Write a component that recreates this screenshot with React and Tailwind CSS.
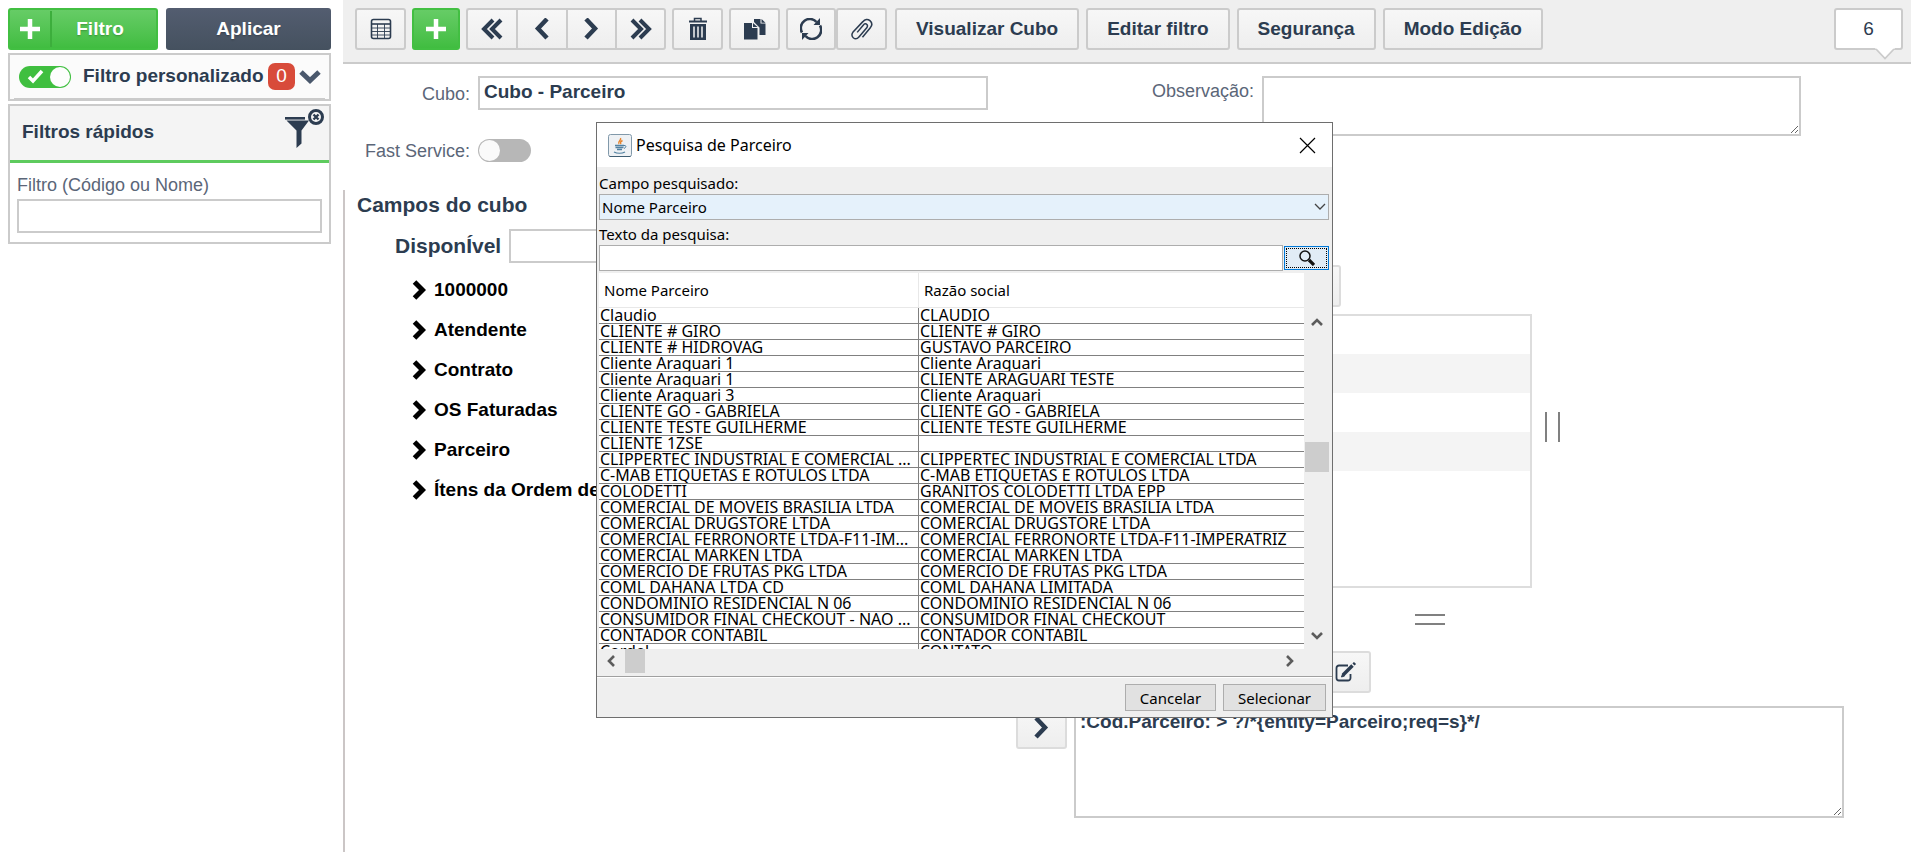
import { useState } from "react";

const partners = [
  ["Claudio", "CLAUDIO"],
  ["CLIENTE # GIRO", "CLIENTE # GIRO"],
  ["CLIENTE # HIDROVAG", "GUSTAVO PARCEIRO"],
  ["Cliente Araguari 1", "Cliente Araguari"],
  ["Cliente Araguari 1", "CLIENTE ARAGUARI TESTE"],
  ["Cliente Araguari 3", "Cliente Araguari"],
  ["CLIENTE GO - GABRIELA", "CLIENTE GO - GABRIELA"],
  ["CLIENTE TESTE GUILHERME", "CLIENTE TESTE GUILHERME"],
  ["CLIENTE 1ZSE", ""],
  ["CLIPPERTEC INDUSTRIAL E COMERCIAL ...", "CLIPPERTEC INDUSTRIAL E COMERCIAL LTDA"],
  ["C-MAB ETIQUETAS E ROTULOS LTDA", "C-MAB ETIQUETAS E ROTULOS LTDA"],
  ["COLODETTI", "GRANITOS COLODETTI LTDA EPP"],
  ["COMERCIAL DE MOVEIS BRASILIA LTDA", "COMERCIAL DE MOVEIS BRASILIA LTDA"],
  ["COMERCIAL DRUGSTORE LTDA", "COMERCIAL DRUGSTORE LTDA"],
  ["COMERCIAL FERRONORTE LTDA-F11-IM...", "COMERCIAL FERRONORTE LTDA-F11-IMPERATRIZ"],
  ["COMERCIAL MARKEN LTDA", "COMERCIAL MARKEN LTDA"],
  ["COMERCIO DE FRUTAS PKG LTDA", "COMERCIO DE FRUTAS PKG LTDA"],
  ["COML DAHANA LTDA CD", "COML DAHANA LIMITADA"],
  ["CONDOMINIO RESIDENCIAL N 06", "CONDOMINIO RESIDENCIAL N 06"],
  ["CONSUMIDOR FINAL CHECKOUT - NAO ...", "CONSUMIDOR FINAL CHECKOUT"],
  ["CONTADOR CONTABIL", "CONTADOR CONTABIL"],
  ["Cordel", "CONTATO"],
];

const cubeFields = ["1000000", "Atendente", "Contrato", "OS Faturadas", "Parceiro", "Ítens da Ordem de Serviço"];

const grayButton =
  "flex items-center justify-center h-[42px] shrink-0 border-2 border-[#cbcbcb] rounded-[3px] bg-linear-to-b from-[#f7f7f7] to-[#eeeeee] text-[#2c3c50]";

function Chevron({ dir = "right", double = false }) {
  const right = double ? "M2 2l9 9-9 9M10 2l9 9-9 9" : "M5 1l9 9.500-9 9.500";
  const left = double ? "M20 2l-9 9 9 9M12 2l-9 9 9 9" : "M16 1L7 10.500 16 20";
  return (
    <svg width="22" height="22" viewBox="0 0 22 22" fill="none" stroke="currentColor" strokeWidth={double ? 4 : 4.5}>
      <path d={dir === "right" ? right : left} />
    </svg>
  );
}

function ScrollArrow({ d }) {
  return (
    <svg width="12" height="12" viewBox="0 0 12 12" fill="none" stroke="#5c5c5c" strokeWidth="2.6">
      <path d={d} />
    </svg>
  );
}

function PlusIcon() {
  return (
    <svg width="22" height="22" viewBox="0 0 22 22" fill="none" stroke="currentColor" strokeWidth="4.5">
      <path d="M11 1v20M1 11h20" />
    </svg>
  );
}

function TableIcon() {
  return (
    <svg width="22" height="22" viewBox="0 0 22 22" fill="none" stroke="currentColor">
      <rect x="1.5" y="1.5" width="19" height="19" rx="2" strokeWidth="1.6" />
      <path d="M1.5 6h19" strokeWidth="1.6" />
      <path d="M1.5 10h19M1.5 13.5h19M1.5 17h19M7.5 6v14M14.5 6v14" strokeWidth="0.9" />
    </svg>
  );
}

function TrashIcon() {
  return (
    <svg width="20" height="24" viewBox="0 0 20 24" fill="none" stroke="currentColor">
      <path d="M1 4.500h18" strokeWidth="2" />
      <path d="M6.500 4V1.500h6.500V4" strokeWidth="1.5" />
      <path d="M2 7h16v16H2z" fill="currentColor" stroke="none" />
      <path d="M6 9.500v11M10 9.500v11M14 9.500v11" stroke="#f3f3f3" strokeWidth="1.5" />
    </svg>
  );
}

function CopyIcon() {
  return (
    <svg width="22" height="22" viewBox="0 0 22 22" fill="currentColor">
      <path d="M10 1h6.500v4.500h5V17h-6V9.500L10 4z" />
      <path d="M17.500 1l4 3.700h-4z" />
      <path d="M0 5h8v5h5.500v11.500H0z" />
      <path d="M9 5l4.500 4H9z" />
    </svg>
  );
}

function RefreshIcon() {
  return (
    <svg width="22" height="22" viewBox="0 0 22 22" fill="none" stroke="currentColor" strokeWidth="2.600">
      <path d="M2 14.500A9 9 0 0 1 16.500 4" />
      <path d="M20 7.500A9 9 0 0 1 5.500 18" />
      <path d="M20 0v7h-6.500zM2 22v-7h6.500z" fill="currentColor" stroke="none" />
    </svg>
  );
}

function ClipIcon() {
  return (
    <svg width="23" height="23" viewBox="0 0 24 24" fill="none" stroke="currentColor" strokeWidth="1.6">
      <path d="M13 20l8-9.500c2.500-3 1.800-6-.2-7.700-2.200-1.800-5.300-1.500-7.400 1L3.200 14.500c-1.700 2-1.500 4.700.2 6.100 1.800 1.500 4.300 1.100 5.900-.8l8.200-9.700c1-1.200 1-2.700 0-3.500-1-.9-2.500-.6-3.500.6L7.500 15" />
    </svg>
  );
}

function FunnelIcon() {
  return (
    <svg width="40" height="42" viewBox="0 0 40 42" fill="#2c3c50">
      <path d="M0 9h20v2.600H0z" />
      <path d="M1.500 12.600h22.500L16.500 22.500v13l-5 4.500V22.500z" />
      <circle cx="31" cy="9" r="6.500" fill="#f4f4f4" stroke="#2c3c50" strokeWidth="3" />
      <path d="M28.500 6.500l5 5M33.500 6.500l-5 5" stroke="#2c3c50" strokeWidth="2.400" />
    </svg>
  );
}

function EditIcon() {
  return (
    <svg width="22" height="20" viewBox="0 0 22 20" fill="none" stroke="currentColor">
      <path d="M13 3.500H4a2.500 2.500 0 0 0-2.500 2.500v10A2.500 2.500 0 0 0 4 18.500h9a2.500 2.500 0 0 0 2.500-2.500v-4" strokeWidth="1.8" />
      <path d="M8 13l9.500-9.500" strokeWidth="3.500" />
      <path d="M18.500 2.500L20 1" strokeWidth="3" />
      <path d="M6.500 15l1-3 2 2z" fill="currentColor" />
    </svg>
  );
}

function JavaIcon() {
  return (
    <svg width="24" height="23" viewBox="0 0 24 23" fill="none">
      <rect x="0.500" y="0.500" width="23" height="22" rx="2" fill="#eef1f4" stroke="#8199aa" />
      <path d="M1.500 22.500h21" stroke="#3f5e73" />
      <path d="M12.500 4c1.500 2.500-3.500 3-1.500 6M14.500 6.500c-2 1-2.500 2-1.500 3.500" stroke="#e8832a" strokeWidth="1.400" />
      <path d="M7 11.500h9M7.500 13.500h8M9 15.500h5M6 18c3 1.500 8 1.500 11 0" stroke="#5382a1" strokeWidth="1.300" />
      <path d="M16 11.500c2.500-.5 2.500 2 0 3" stroke="#5382a1" />
    </svg>
  );
}

function Sidebar() {
  return (
    <aside className="w-[343px] shrink-0 pl-2 pr-3 pt-2">
      <div className="flex gap-2 h-[42px] text-[19px] font-bold text-white">
        <button className="flex w-[150px] items-center rounded-[3px] border-2 border-[#42bf42] bg-linear-to-b from-[#66cc66] to-[#40bd40] text-shadow-sm">
          <span className="flex h-9 w-[42px] items-center justify-center border-r-2 border-[#3cae3c]">
            <PlusIcon />
          </span>
          <span className="flex-1 pr-2">Filtro</span>
        </button>
        <button className="flex-1 rounded-[3px] bg-linear-to-b from-[#535d70] to-[#45515f] text-shadow-sm">Aplicar</button>
      </div>

      <div className="mt-[3px] flex h-12 flex-col border-2 border-[#cbcbcb] bg-[#fbfbfb]">
        <div className="flex flex-1 items-center pl-[9px] pr-2">
          <label className="relative h-[22px] w-[52px] shrink-0">
            <input type="checkbox" defaultChecked aria-label="Filtro personalizado" className="block h-full w-full appearance-none rounded-full bg-[#40bf40]" />
            <svg className="pointer-events-none absolute inset-0" width="52" height="22" fill="none">
              <path d="M10 11l4 4 9-10" stroke="#fff" strokeWidth="3.500" />
              <circle cx="41" cy="11" r="10" fill="#fdfdfd" />
            </svg>
          </label>
          <span className="ml-3 flex-1 whitespace-nowrap text-[19px] font-bold">Filtro personalizado</span>
          <span className="flex h-[27px] w-[27px] items-center justify-center rounded-[7px] bg-[#d84b3a] text-[19px] text-white">0</span>
          <svg className="ml-1" width="22" height="14" viewBox="0 0 22 14" fill="none" stroke="#4a586c" strokeWidth="5">
            <path d="M2 2l9 8.500L20 2" />
          </svg>
        </div>
        <div className="mx-1 h-px bg-[#cbcbcb]"></div>
      </div>

      <div className="mt-[3px] border-2 border-[#cbcbcb]">
        <div className="flex h-[57px] items-start justify-between border-b-[3px] border-[#5ecb5e] bg-[#f4f4f4] pl-3 pr-1">
          <h2 className="pt-[14px] text-[19px] leading-[24px] font-bold">Filtros rápidos</h2>
          <button aria-label="Limpar filtros" className="pt-0.5"><FunnelIcon /></button>
        </div>
        <div className="px-[7px] pt-[9px] pb-[9px]">
          <label htmlFor="filtro" className="block text-lg leading-[26px] text-[#5b6678]">Filtro (Código ou Nome)</label>
          <input id="filtro" className="mt-px block h-[34px] w-full border-2 border-[#cbcbcb] bg-white px-1" />
        </div>
      </div>
    </aside>
  );
}

function Toolbar() {
  return (
    <header className="flex h-16 items-start border-b-2 border-[#cbcbcb] bg-[#efefef] pt-2 pr-2 pl-3 text-[19px] font-bold">
      <div className="flex gap-1.5">
        <button aria-label="Grade" className={`${grayButton} w-[51px]`}><TableIcon /></button>
        <button aria-label="Novo" className="flex h-[42px] w-12 shrink-0 items-center justify-center rounded-[3px] border-2 border-[#42bf42] bg-linear-to-b from-[#66cc66] to-[#40bd40] text-white">
          <PlusIcon />
        </button>
        <div className="flex">
          <button aria-label="Primeiro" className={`${grayButton} w-[50px] rounded-r-none border-r-0`}><Chevron dir="left" double /></button>
          <button aria-label="Anterior" className={`${grayButton} w-[50px] rounded-none border-r-0`}><Chevron dir="left" /></button>
          <button aria-label="Próximo" className={`${grayButton} w-[49px] rounded-none border-r-0`}><Chevron /></button>
          <button aria-label="Último" className={`${grayButton} w-[51px] rounded-l-none`}><Chevron double /></button>
        </div>
        <button aria-label="Excluir" className={`${grayButton} w-[51px]`}><TrashIcon /></button>
        <button aria-label="Duplicar" className={`${grayButton} w-[51px]`}><CopyIcon /></button>
        <div className="flex">
          <button aria-label="Atualizar" className={`${grayButton} w-[50px]`}><RefreshIcon /></button>
          <button aria-label="Anexo" className={`${grayButton} w-[51px]`}><ClipIcon /></button>
        </div>
      </div>
      <div className="ml-2 flex gap-[7px]">
        <button className={`${grayButton} px-[19px]`}>Visualizar Cubo</button>
        <button className={`${grayButton} px-[19px]`}>Editar filtro</button>
        <button className={`${grayButton} px-[19px]`}>Segurança</button>
        <button className={`${grayButton} px-[19px]`}>Modo Edição</button>
      </div>
      <div className="relative ml-auto flex h-[42px] w-[69px] items-center justify-center rounded-[3px] border-2 border-[#cbcbcb] bg-white font-normal">
        6
        <svg className="absolute top-[38px] right-1.5" width="20" height="12" viewBox="0 0 20 12">
          <path d="M0 0h20L10 11z" fill="#fff" />
          <path d="M1 1l9 9.500L19 1" fill="none" stroke="#cbcbcb" strokeWidth="1.800" />
        </svg>
      </div>
    </header>
  );
}

function SearchDialog() {
  const [field, setField] = useState("Nome Parceiro");
  const [text, setText] = useState("");

  return (
    <div
      role="dialog"
      aria-label="Pesquisa de Parceiro"
      className="absolute top-[122px] left-[596px] w-[737px] border border-[#6e6e6e] bg-[#efefef] font-['Noto_Sans',sans-serif] text-[15px] text-black"
    >
      <div className="flex h-11 items-center bg-white pr-4 pl-[11px]">
        <JavaIcon />
        <span className="ml-1 text-base">Pesquisa de Parceiro</span>
        <button aria-label="Fechar" className="ml-auto">
          <svg width="17" height="17" viewBox="0 0 17 17" stroke="#000" strokeWidth="1.200">
            <path d="M1 1l15 15M16 1L1 16" />
          </svg>
        </button>
      </div>

      <div className="pt-1.5 pr-[3px] pl-0.5">
        <label htmlFor="campo" className="block h-[21px] leading-[20px]">Campo pesquisado:</label>
        <div className="relative">
          <select id="campo" value={field} onChange={(e) => setField(e.target.value)} className="block h-[26px] w-full appearance-none border border-[#adadad] bg-[#e5f1fb] pl-0.5">
            <option>Nome Parceiro</option>
            <option>Razão social</option>
          </select>
          <svg className="pointer-events-none absolute top-[9px] right-[3px]" width="12" height="8" viewBox="0 0 12 8" fill="none" stroke="#444" strokeWidth="1.300">
            <path d="M1 1l5 5 5-5" />
          </svg>
        </div>
        <label htmlFor="texto" className="mt-1 block h-[21px] leading-[20px]">Texto da pesquisa:</label>
        <div className="flex h-[26px] items-center gap-px">
          <input id="texto" value={text} onChange={(e) => setText(e.target.value)} className="h-full flex-1 border border-[#adadad] bg-white px-1" />
          <button aria-label="Pesquisar" className="h-6 w-[45px] border border-[#0078d7] bg-[#e1ecf6] p-px">
            <span className="flex h-full items-center justify-center border border-dotted border-black">
              <svg width="16" height="16" viewBox="0 0 16 16" fill="none" stroke="#111">
                <circle cx="6" cy="6" r="5" strokeWidth="1.500" />
                <path d="M10 10l5 5" strokeWidth="3.200" />
              </svg>
            </span>
          </button>
        </div>
      </div>

      <div className="mt-0.5 flex h-[376px] pr-[3px] pl-0.5">
        <div className="flex-1 overflow-hidden pr-px">
          <table className="w-full table-fixed border-separate border-spacing-0 bg-white">
            <thead>
              <tr className="h-[35px] text-left">
                <th className="w-[320px] border-r border-b border-[#e8e8e8] px-[5px] font-normal">Nome Parceiro</th>
                <th className="border-b border-[#e8e8e8] px-[5px] font-normal">Razão social</th>
              </tr>
            </thead>
            <tbody className="text-base leading-[15px] whitespace-nowrap">
              {partners.map(([nome, razao], i) => (
                <tr key={i}>
                  <td className="border-r border-b border-[#808080] p-0">
                    <div className="h-[15px] overflow-hidden pl-px">{nome}</div>
                  </td>
                  <td className="border-b border-[#808080] p-0">
                    <div className="h-[15px] overflow-hidden pl-px">{razao}</div>
                  </td>
                </tr>
              ))}
            </tbody>
          </table>
        </div>
        <div className="flex w-6 flex-col items-center pt-[43px] pb-[7px]">
          <ScrollArrow d="M1 9l5-5 5 5" />
          <div className="mt-[114px] h-[30px] w-full bg-[#cdcdcd]"></div>
          <div className="mt-auto flex"><ScrollArrow d="M1 3l5 5 5-5" /></div>
        </div>
      </div>

      <div className="flex h-7 items-start border-b border-[#a0a0a0] pr-9 pl-2">
        <div className="flex h-6 flex-1 items-center">
          <ScrollArrow d="M9 1L4 6l5 5" />
          <div className="ml-2 h-6 w-5 bg-[#cdcdcd]"></div>
          <div className="ml-auto flex"><ScrollArrow d="M3 1l5 5-5 5" /></div>
        </div>
      </div>

      <div className="flex h-10 items-center justify-end gap-[7px] border-t border-white pr-1.5">
        <button className="h-[27px] w-[91px] border border-[#adadad] bg-[#e1e1e1] leading-[22px]">Cancelar</button>
        <button className="h-[27px] w-[103px] border border-[#adadad] bg-[#e1e1e1] leading-[22px]">Selecionar</button>
      </div>
    </div>
  );
}

export default function App() {
  return (
    <div className="relative flex min-h-screen overflow-hidden bg-white font-['Liberation_Sans',Arial,sans-serif] text-[#2c3c50]">
      <Sidebar />

      <main className="flex min-w-0 flex-1 flex-col">
        <Toolbar />

        <form className="grid grid-cols-[127px_510fr_258px_539fr_102px] grid-rows-[34px_23px] gap-x-2 gap-y-[29px] pt-3 text-lg text-[#5b6678]">
          <label htmlFor="cubo" className="text-right leading-9">Cubo:</label>
          <input id="cubo" defaultValue="Cubo - Parceiro" className="min-w-0 border-2 border-[#cbcbcb] pb-0.5 pl-1 text-[19px] font-bold text-[#2c3c50]" />
          <label htmlFor="obs" className="text-right leading-[30px]">Observação:</label>
          <textarea id="obs" className="row-span-2 h-[60px] min-w-0 border-2 border-[#cbcbcb]"></textarea>
          <span className="row-span-2"></span>
          <label htmlFor="fast" className="self-center text-right">Fast Service:</label>
          <div className="relative h-[23px] w-[53px]">
            <input id="fast" type="checkbox" className="block h-full w-full appearance-none rounded-full bg-[#b7b7b7]" />
            <span className="pointer-events-none absolute top-px left-px h-[21px] w-[21px] rounded-full bg-[#fafafa]"></span>
          </div>
        </form>

        <section className="mt-7 grid flex-1 grid-cols-[671fr_828fr_67px] border-l-2 border-[#cbc6c6]">
          <div className="pl-3">
            <h2 className="text-[21px] leading-[30px] font-bold">Campos do cubo</h2>
            <div className="mt-[9px] flex items-center gap-2 pl-[38px]">
              <label htmlFor="disponivel" className="text-[21px] font-bold">DisponÍvel</label>
              <input id="disponivel" className="h-[34px] w-[300px] border-2 border-[#cbcbcb] px-1" />
            </div>
            <ul className="mt-[7px] pl-[55px] text-[19px] font-bold text-black">
              {cubeFields.map((name) => (
                <li key={name} className="flex h-10 items-center gap-2">
                  <svg width="14" height="20" viewBox="0 0 14 20" fill="none" stroke="currentColor" strokeWidth="5">
                    <path d="M2.500 2l8 8-8 8" />
                  </svg>
                  {name}
                </li>
              ))}
            </ul>
          </div>

          <div className="flex min-w-0 flex-col pt-[75px]">
            <div className="flex items-center gap-[13px] pr-[284px] pl-[58px]">
              <div className="flex-1">
                <div className="flex h-[49px] items-start pl-[216px]">
                  <button aria-label="Adicionar" className={`${grayButton} w-[51px] border-[#dcdcdc]`}><PlusIcon /></button>
                </div>
                <div className="h-[274px] border-2 border-[#dddddd]">
                  <div className="h-[38px]"></div>
                  <div className="h-[39px] bg-[#f4f4f4]"></div>
                  <div className="h-[39px]"></div>
                  <div className="h-[39px] bg-[#f4f4f4]"></div>
                </div>
              </div>
              <div className="h-[30px] w-[15px] border-x-2 border-[#808080]"></div>
            </div>
            <div className="mt-[26px] h-[11px] w-[30px] self-center border-y-2 border-[#808080]"></div>
            <div className="mt-[26px] pl-[304px]">
              <button aria-label="Editar" className={`${grayButton} w-[51px] border-[#dcdcdc]`}><EditIcon /></button>
            </div>
            <div className="mt-[13px] flex items-start gap-[7px]">
              <button aria-label="Inserir" className={`${grayButton} mt-px w-[51px] border-[#dcdcdc]`}><Chevron /></button>
              <textarea
                aria-label="Expressão"
                defaultValue=":Cod.Parceiro: > ?/*{entity=Parceiro;req=s}*/"
                className="block h-28 min-w-0 flex-1 border-2 border-[#cbcbcb] px-1 py-[3px] text-[19px] leading-[22px] font-bold"
              ></textarea>
            </div>
          </div>
          <span></span>
        </section>
      </main>

      <SearchDialog />
    </div>
  );
}
